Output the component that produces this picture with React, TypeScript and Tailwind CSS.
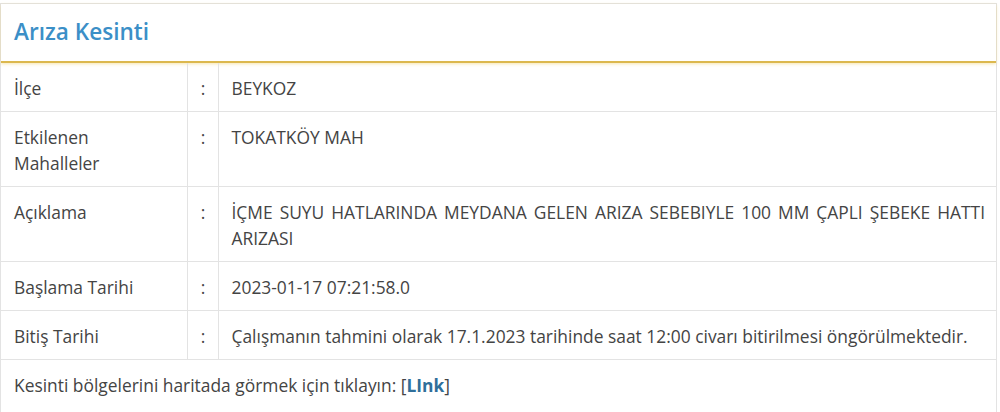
import React from "react";

const rows: { label: React.ReactNode; value: React.ReactNode; justify?: boolean }[] = [
  { label: "İlçe", value: "BEYKOZ" },
  { label: <>Etkilenen<br />Mahalleler</>, value: "TOKATKÖY MAH" },
  {
    label: "Açıklama",
    value: "İÇME SUYU HATLARINDA MEYDANA GELEN ARIZA SEBEBIYLE 100 MM ÇAPLI ŞEBEKE HATTI ARIZASI",
    justify: true,
  },
  { label: "Başlama Tarihi", value: "2023-01-17 07:21:58.0" },
  {
    label: "Bitiş Tarihi",
    value: "Çalışmanın tahmini olarak 17.1.2023 tarihinde saat 12:00 civarı bitirilmesi öngörülmektedir.",
  },
];

export default function App() {
  return (
    <div
      className="w-[1000px] h-[412px] bg-white pt-[3px] overflow-hidden text-[#444] text-[17.4px] leading-[26px]"
      style={{ fontFamily: '"Open Sans", "Noto Sans", sans-serif' }}
    >
      <div className="w-[997px] h-[409px] flex flex-col border border-[#e3e3e3] border-b-0">
        <div className="h-[59px] shrink-0 flex items-center pl-[13px] pb-[1px] border-b-2 border-[#dcb84e] shadow-[0_1px_3px_rgba(240,200,80,0.45)]">
          <h1 className="text-[22.6px] font-semibold text-[#3b8fc7]">Arıza Kesinti</h1>
        </div>
        <table className="w-full border-collapse">
          <tbody>
            {rows.map((r, i) => (
              <tr key={i} className="border-b border-[#e3e3e3] align-top">
                <td className="w-[186px] border-r border-[#e3e3e3] pl-[13px] pr-2 pt-[12px] pb-[10px]">{r.label}</td>
                <td className="w-[31px] border-r border-[#e3e3e3] text-center pt-[12px] pb-[10px] pl-[1px]">:</td>
                <td className={"pl-[13px] pr-[11px] pt-[12px] pb-[10px] " + (r.justify ? "text-justify" : "")}>{r.value}</td>
              </tr>
            ))}
            <tr>
              <td colSpan={3} className="pl-[13px] pt-[12px] pb-[10px]">
                Kesinti bölgelerini haritada görmek için tıklayın: [<a className="font-bold text-[#2f6f9a]">LInk</a>]
              </td>
            </tr>
          </tbody>
        </table>
      </div>
    </div>
  );
}
